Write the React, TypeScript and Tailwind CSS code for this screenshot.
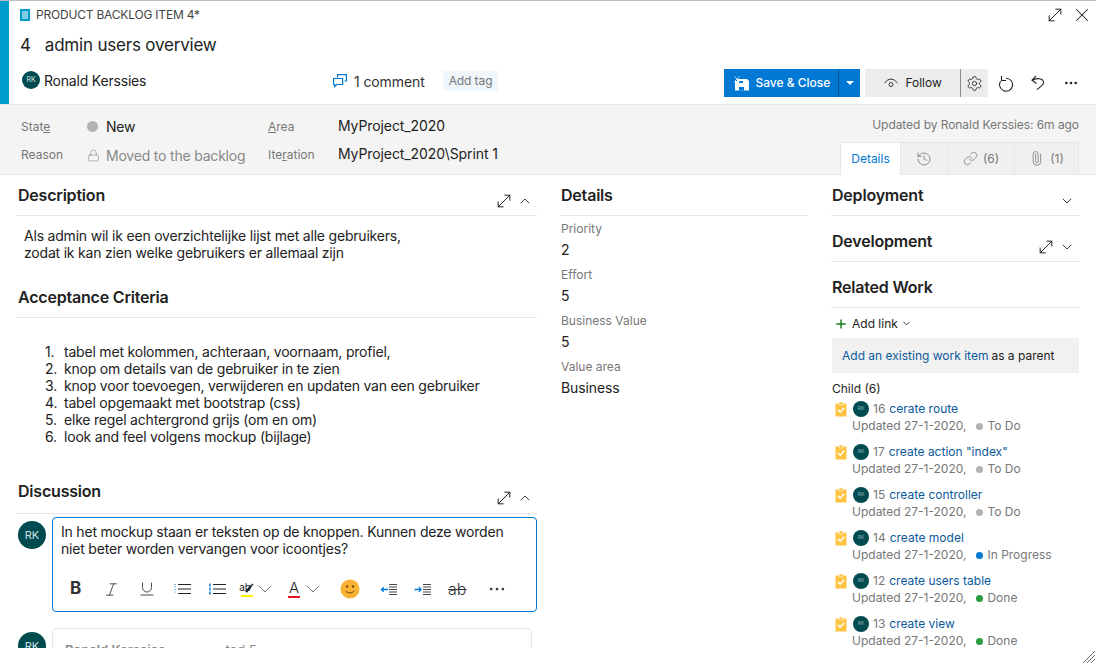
import React from "react";
import { ChevronDown, ChevronUp, Ellipsis, History, Link, Lock, MoveDiagonal, Paperclip, Plus, Settings, X, Italic, Underline } from "lucide-react";

function Avatar({ size = "small" }: { size?: "small" | "mini" | "large" }) {
  if (size === "large")
    return <div className="flex h-[28px] w-[28px] shrink-0 items-center justify-center rounded-full bg-[#004b50] text-[11px] text-[#cfe2e3]">RK</div>;
  if (size === "small")
    return <div className="flex h-[18px] w-[18px] shrink-0 items-center justify-center rounded-full bg-[#004b50] text-[7px] text-[#cfe2e3]">RK</div>;
  return <div className="flex h-[16px] w-[16px] shrink-0 items-center justify-center rounded-full bg-[#004b50] text-[5px] text-[#8fb4b6]">RK</div>;
}

function Section({ title, expand, chevron, tall }: { title: string; expand?: boolean; chevron?: "up" | "down"; tall?: boolean }) {
  return (
    <div className={`flex justify-between border-b border-[#e6e6e6] ${tall ? "h-[43px]" : "h-[41px]"}`}>
      <div className="h-[40px] pl-px text-[16px] leading-[40px] font-semibold tracking-[-0.2px] text-[#222]">{title}</div>
      <div className="flex items-center gap-[3px] pt-[12px] pr-[4px]">
        {expand && <MoveDiagonal size={20} strokeWidth={1.2} className="text-[#222]" />}
        {chevron === "up" && <ChevronUp size={16} strokeWidth={1.4} className="text-[#333]" />}
        {chevron === "down" && <ChevronDown size={16} strokeWidth={1.4} className="text-[#333]" />}
      </div>
    </div>
  );
}

function Field({ label, value }: { label: string; value: string }) {
  return (
    <div className="h-[46px]">
      <div className="h-[21px] text-[12px] leading-[21px] text-[#777]">{label}</div>
      <div className="h-[25px] text-[14px] leading-[21px] tracking-[-0.1px] text-[#222]">{value}</div>
    </div>
  );
}

function TaskIcon() {
  return (
    <svg width="12" height="16" viewBox="0 0 12 16" className="shrink-0">
      <path d="M0.5 2.5h11v13h-11z" fill="#ffc341" />
      <path d="M4 1h4v3H4z" fill="#ffc341" stroke="#fff" strokeWidth="0.6" />
      <path d="M2.8 8.8l2.4 2.4 4-4.4" fill="none" stroke="#fff" strokeWidth="1.5" />
    </svg>
  );
}

const children = [
  { id: 16, title: "cerate route", state: "To Do", dot: "bg-[#b2b2b2]" },
  { id: 17, title: 'create action "index"', state: "To Do", dot: "bg-[#b2b2b2]" },
  { id: 15, title: "create controller", state: "To Do", dot: "bg-[#b2b2b2]" },
  { id: 14, title: "create model", state: "In Progress", dot: "bg-[#0078d4]" },
  { id: 12, title: "create users table", state: "Done", dot: "bg-[#2b9a3e]" },
  { id: 13, title: "create view", state: "Done", dot: "bg-[#2b9a3e]" },
];

const criteria = [
  "tabel met kolommen, achteraan, voornaam, profiel,",
  "knop om details van de gebruiker in te zien",
  "knop voor toevoegen, verwijderen en updaten van een gebruiker",
  "tabel opgemaakt met bootstrap (css)",
  "elke regel achtergrond grijs (om en om)",
  "look and feel volgens mockup (bijlage)",
];

function ListIcon({ numbered }: { numbered?: boolean }) {
  return (
    <svg width="17" height="12" viewBox="0 0 17 12">
      {numbered ? (
        <path d="M1 0.5v3M1 4.5v3M1 8.5v3" stroke="#0078d4" strokeWidth="1.4" />
      ) : (
        <path d="M1 1v10" stroke="#0078d4" strokeWidth="1" strokeDasharray="1 1.5" />
      )}
      {[1.5, 6, 10.5].map((y) => (
        <path key={y} d={`M4 ${y}h13`} stroke="#222" strokeWidth="1" />
      ))}
    </svg>
  );
}

function IndentIcon({ out }: { out?: boolean }) {
  return (
    <svg width="17" height="11" viewBox="0 0 17 11">
      <path d="M9 0.5h8M9 3h8M9 5.5h8M9 8h8M9 10.5h8" stroke="#333" strokeWidth="0.9" />
      {out ? (
        <path d="M8 5.5H1.5M3.7 3.3L1.5 5.5l2.2 2.2" fill="none" stroke="#0078d4" strokeWidth="1.3" />
      ) : (
        <path d="M0.5 5.5H7M4.8 3.3L7 5.5 4.8 7.7" fill="none" stroke="#0078d4" strokeWidth="1.3" />
      )}
    </svg>
  );
}

function Toolbar() {
  return (
    <div className="flex h-[20px] items-center text-[#333]">
      <span className="flex w-[36px] justify-center pl-[9px] text-[17px] font-bold text-[#333]">B</span>
      <span className="flex w-[36px] justify-center pl-[8px]"><Italic size={17} strokeWidth={1.2} /></span>
      <span className="flex w-[36px] justify-center pl-[8px]"><Underline size={18} strokeWidth={1.2} /></span>
      <span className="flex w-[35px] justify-center pl-[7px]"><ListIcon /></span>
      <span className="flex w-[35px] justify-center pl-[7px]"><ListIcon numbered /></span>
      <span className="relative flex w-[26px] flex-col items-center pl-[6px] leading-none">
        <span className="-ml-[4px] text-[10px] leading-[12px] text-[#222]">ab</span>
        <span className="mt-[2px] h-[2px] w-[12px] bg-[#fff200]" />
        <svg width="10" height="11" viewBox="0 0 10 11" className="absolute top-[2px] left-[13px]">
          <path d="M9 1L6.5 3.5" stroke="#222" strokeWidth="1.5" />
          <path d="M7 3L2 9" stroke="#222" strokeWidth="2.2" />
        </svg>
      </span>
      <ChevronDown size={24} strokeWidth={0.9} className="-mx-[4px] text-[#666]" />
      <span className="ml-[12px] flex w-[18px] flex-col items-center leading-none">
        <span className="text-[15px] leading-[15px] font-light text-[#222]">A</span>
        <span className="mt-px h-[2px] w-[12px] bg-[#e81123]" />
      </span>
      <ChevronDown size={24} strokeWidth={0.9} className="-mx-[4px] ml-[-2px] text-[#666]" />
      <svg width="20" height="20" viewBox="0 0 20 20" className="ml-[19px]">
        <circle cx="10" cy="10" r="9.5" fill="#f9b233" />
        <circle cx="7" cy="7.5" r="1.2" fill="#7a4a10" />
        <circle cx="13" cy="7.5" r="1.2" fill="#7a4a10" />
        <path d="M5.5 12q4.5 4 9 0" fill="none" stroke="#7a4a10" strokeWidth="1" />
      </svg>
      <span className="ml-[20px]"><IndentIcon out /></span>
      <span className="ml-[17px]"><IndentIcon /></span>
      <span className="ml-[17px] text-[16px] leading-none font-light text-[#333] line-through">ab</span>
      <Ellipsis size={20} strokeWidth={1.3} className="ml-[21px] text-[#333]" />
    </div>
  );
}

export default function App() {
  return (
    <div className="h-[667px] w-[1096px] overflow-hidden border-t border-[#bdbdbd] bg-white font-['Inter',sans-serif] text-[#222]">
      <header className="flex h-[104px] border-b border-[#e6e6e6]">
        <div className="w-[9px] shrink-0 bg-[#009ccc]" />
        <div className="min-w-0 flex-1">
          <div className="flex h-[28px] items-center justify-between pr-[3px] pl-[11px]">
            <div className="flex items-center gap-[6px] text-[12px] tracking-[-0.2px] text-[#444]">
              <svg width="10" height="12" viewBox="0 0 10 12">
                <rect width="10" height="12" fill="#009ccc" />
                <path d="M2 3h6M2 5h6M2 7h6M2 9h6" stroke="#fff" strokeWidth="1" />
              </svg>
              PRODUCT BACKLOG ITEM 4*
            </div>
            <div className="flex items-center gap-[6px] text-[#222]">
              <MoveDiagonal size={20} strokeWidth={1.2} />
              <X size={22} strokeWidth={1.1} />
            </div>
          </div>
          <div className="flex h-[32px] items-center gap-[14px] pt-[2px] pl-[11px] text-[17px] tracking-[-0.2px] text-[#222]">
            <span>4</span>
            <span>admin users overview</span>
          </div>
          <div className="mt-[8px] flex h-[28px] items-center">
            <div className="mb-[4px] flex items-center">
              <div className="mb-[2px] ml-[13px] flex w-[311px] items-center gap-[4px] text-[14px] tracking-[-0.2px]">
                <Avatar />
                Ronald Kerssies
              </div>
              <svg width="14" height="14" viewBox="0 0 14 14" fill="none" stroke="#0078d4" strokeWidth="1.2" className="shrink-0">
                <path d="M4.5 3.5V0.6h8.9v6.4h-2M0.6 4.5h9v6h-6l-2 2v-2h-1z" />
              </svg>
              <span className="ml-[7px] text-[14px] tracking-[-0.1px] text-[#333]">1 comment</span>
              <span className="ml-[18px] flex h-[20px] items-center bg-[#eff6fc] px-[6px] text-[12px] tracking-[-0.1px] text-[#777]">Add tag</span>
            </div>
            <div className="ml-[226px] flex h-[28px] bg-[#0078d4] text-[12px] font-medium text-white">
              <div className="flex w-[115px] items-center gap-[6px] border-r border-[#004e8c] pl-[10px]">
                <svg width="15" height="15" viewBox="0 0 15 15">
                  <path d="M3 3h10l2 2v9.5H1V5h2z" fill="#fff" />
                  <path d="M5 11h5v3.5H5z" fill="#0078d4" />
                  <path d="M5 5h4v2H5z" fill="#0078d4" />
                  <path d="M0.5 0.5l5 5M5.5 0.5l-5 5" stroke="#dbeaf7" strokeWidth="0.8" />
                </svg>
                Save &amp; Close
              </div>
              <div className="flex w-[21px] items-center justify-center">
                <div className="h-0 w-0 border-x-[4px] border-t-[4px] border-x-transparent border-t-white" />
              </div>
            </div>
            <div className="ml-[5px] flex h-[28px] bg-[#ececec] text-[12px] text-[#222]">
              <div className="flex w-[96px] items-center gap-[7px] border-r border-[#8a8a8a] pl-[19px]">
                <svg width="14" height="10" viewBox="0 0 14 10" fill="none" stroke="#333" strokeWidth="1">
                  <path d="M0.5 5q6.5-8 13 0" />
                  <circle cx="7" cy="6.5" r="2" />
                </svg>
                Follow
              </div>
              <div className="flex w-[27px] items-center justify-center">
                <Settings size={17} strokeWidth={1.2} />
              </div>
            </div>
            <svg width="18" height="18" viewBox="0 0 18 18" fill="none" stroke="#222" strokeWidth="1.1" className="ml-[9px] shrink-0">
              <path d="M9 4.2A6.5 6.5 0 1 1 3.6 7.2" />
              <path d="M4.5 2v4.5H9" />
            </svg>
            <svg width="14" height="16" viewBox="0 0 14 16" fill="none" stroke="#222" strokeWidth="1.1" className="ml-[16px] shrink-0">
              <path d="M1 5.5C5 2.5 13 3 12.5 8 12.3 10 9 12 6 14.5" />
              <path d="M5 1L1 5.2 5.5 8.5" />
            </svg>
            <Ellipsis size={16} strokeWidth={2} className="ml-[18px] text-[#222]" />
          </div>
        </div>
      </header>

      <section className="flex h-[70px] border-b border-[#e6e6e6] bg-[#f4f4f4] text-[14px]">
        <div className="w-[268px] pt-[8px] pl-[21px]">
          <div className="flex h-[28px] items-center">
            <span className="w-[66px] text-[12px] text-[#777]">Stat<span className="underline">e</span></span>
            <span className="mb-[2px] h-[11px] w-[11px] rounded-full bg-[#b2b2b2]" />
            <span className="mb-[2px] ml-[8px] tracking-[-0.2px] text-[#222]">New</span>
          </div>
          <div className="flex h-[28px] items-center">
            <span className="w-[66px] text-[12px] text-[#777]">Reason</span>
            <Lock size={13} strokeWidth={1} className="text-[#777]" />
            <span className="ml-[6px] whitespace-nowrap tracking-[-0.2px] text-[#888]">Moved to the backlog</span>
          </div>
        </div>
        <div className="w-[300px] pt-[8px]">
          <div className="flex h-[28px] items-center">
            <span className="w-[70px] text-[12px] text-[#777]"><span className="underline">A</span>rea</span>
            <span className="mb-[4px] tracking-[-0.1px] text-[#222]">MyProject_2020</span>
          </div>
          <div className="flex h-[28px] items-center">
            <span className="w-[70px] text-[12px] text-[#777]">Ite<span className="underline">r</span>ation</span>
            <span className="mb-[4px] tracking-[-0.1px] text-[#222]">MyProject_2020\Sprint 1</span>
          </div>
        </div>
        <div className="ml-[272px] flex w-[239px] flex-col items-end">
          <div className="pt-[12px] text-[12px] leading-[16px] tracking-[-0.06px] whitespace-nowrap text-[#777]">Updated by Ronald Kerssies: 6m ago</div>
          <div className="mt-[9px] flex h-[33px] text-[12px] text-[#777]">
            <div className="z-10 flex h-[33px] w-[60px] items-center justify-center border-t border-l border-[#e6e6e6] bg-white text-[#0078d4]">Details</div>
            <div className="flex h-[32px] w-[47px] items-center justify-center border-t border-l border-[#e6e6e6] bg-[#f0f0f0]"><History size={16} strokeWidth={1.2} /></div>
            <div className="flex h-[32px] w-[67px] items-center justify-center gap-[5px] border-t border-l border-[#e6e6e6] bg-[#f0f0f0]"><Link size={15} strokeWidth={1.2} />(6)</div>
            <div className="flex h-[32px] w-[65px] items-center justify-center gap-[6px] border-x border-t border-[#e6e6e6] bg-[#f0f0f0]"><Paperclip size={15} strokeWidth={1.2} className="-rotate-45" />(1)</div>
          </div>
        </div>
      </section>

      <main className="flex h-[473px] overflow-hidden text-[14px] text-[#222]">
        <div className="ml-[17px] w-[520px] shrink-0">
          <Section title="Description" expand chevron="up" />
          <div className="pt-[11px] pl-[7px] text-[14px] leading-[17px] tracking-[-0.2px]">
            <div>Als admin wil ik een overzichtelijke lijst met alle gebruikers,</div>
            <div>zodat ik kan zien welke gebruikers er allemaal zijn</div>
          </div>
          <div className="mt-[16px]"><Section title="Acceptance Criteria" /></div>
          <ol className="pt-[25px] pl-[28px] text-[14px] leading-[17px] tracking-[-0.2px]">
            {criteria.map((item, i) => (
              <li key={item} className="flex">
                <span className="w-[19px] shrink-0">{i + 1}.</span>
                <span>{item}</span>
              </li>
            ))}
          </ol>
          <div className="mt-[26px]"><Section title="Discussion" expand chevron="up" tall /></div>
          <div className="mt-[3px] flex gap-[6px]">
            <div className="mt-[4px] ml-px"><Avatar size="large" /></div>
            <div className="h-[95px] flex-1 rounded-[4px] border border-[#0078d4] px-[8px] pt-[5px]">
              <div className="text-[14px] leading-[17px] tracking-[-0.2px] text-[#222]">
                In het mockup staan er teksten op de knoppen. Kunnen deze worden<br />
                niet beter worden vervangen voor icoontjes?
              </div>
              <div className="mt-[22px] -ml-[8px]"><Toolbar /></div>
            </div>
          </div>
          <div className="mt-[16px] flex gap-[6px]">
            <div className="mt-[4px] ml-px"><Avatar size="large" /></div>
            <div className="mr-[5px] h-[60px] flex-1 rounded-[4px] border border-[#e6e6e6] px-[12px] pt-[12px] text-[13px] text-[#888]">
              <span className="font-semibold">Ronald Kerssies</span>
              <span className="ml-[60px]">ted 5</span>
            </div>
          </div>
        </div>

        <div className="ml-[24px] w-[247px] shrink-0">
          <div className="-ml-px"><Section title="Details" /></div>
          <div className="pt-[2px]">
            <Field label="Priority" value="2" />
            <Field label="Effort" value="5" />
            <Field label="Business Value" value="5" />
            <Field label="Value area" value="Business" />
          </div>
        </div>

        <div className="ml-[24px] w-[247px] shrink-0">
          <div className="-ml-px">
            <Section title="Deployment" chevron="down" />
            <div className="mt-[5px]"><Section title="Development" expand chevron="down" /></div>
            <div className="mt-[5px]"><Section title="Related Work" /></div>
          </div>
          <div className="flex h-[30px] items-center pt-px pl-[2px] text-[12px] text-[#222]">
            <Plus size={14} strokeWidth={2.4} className="text-[#107c10]" />
            <span className="ml-[4px]">Add link</span>
            <ChevronDown size={11} className="ml-[3px]" />
          </div>
          <div className="flex h-[35px] items-center bg-[#f1f1f1] pl-[10px] text-[12px] text-[#222]">
            <span className="text-[#0b5a9b]">Add an existing work item</span>
            <span className="ml-[3px]">as a parent</span>
          </div>
          <div className="mt-[8px] h-[15px] text-[12px] leading-[15px]">Child (6)</div>
          <div className="mt-[2px]">
            {children.map((c) => (
              <div key={c.id} className="h-[43px] text-[12px]">
                <div className="flex h-[21px] items-center pl-[3px]">
                  <TaskIcon />
                  <span className="ml-[6px]"><Avatar size="mini" /></span>
                  <span className="ml-[4px] text-[#777]">{c.id}</span>
                  <span className="ml-[4px] whitespace-nowrap text-[#0b5a9b]">{c.title}</span>
                </div>
                <div className="flex h-[14px] items-center pl-[20px] text-[#777]">
                  <span>Updated 27-1-2020,</span>
                  <span className={`ml-[10px] h-[7px] w-[7px] rounded-full ${c.dot}`} />
                  <span className="ml-[4px]">{c.state}</span>
                </div>
              </div>
            ))}
          </div>
        </div>
      </main>

      <div className="flex justify-end pt-[3px] pr-px">
        <svg width="12" height="12" viewBox="0 0 12 12" stroke="#444" strokeWidth="0.8">
          <path d="M0 12L12 0M4 12l8-8M8 12l4-4" />
        </svg>
      </div>
    </div>
  );
}
